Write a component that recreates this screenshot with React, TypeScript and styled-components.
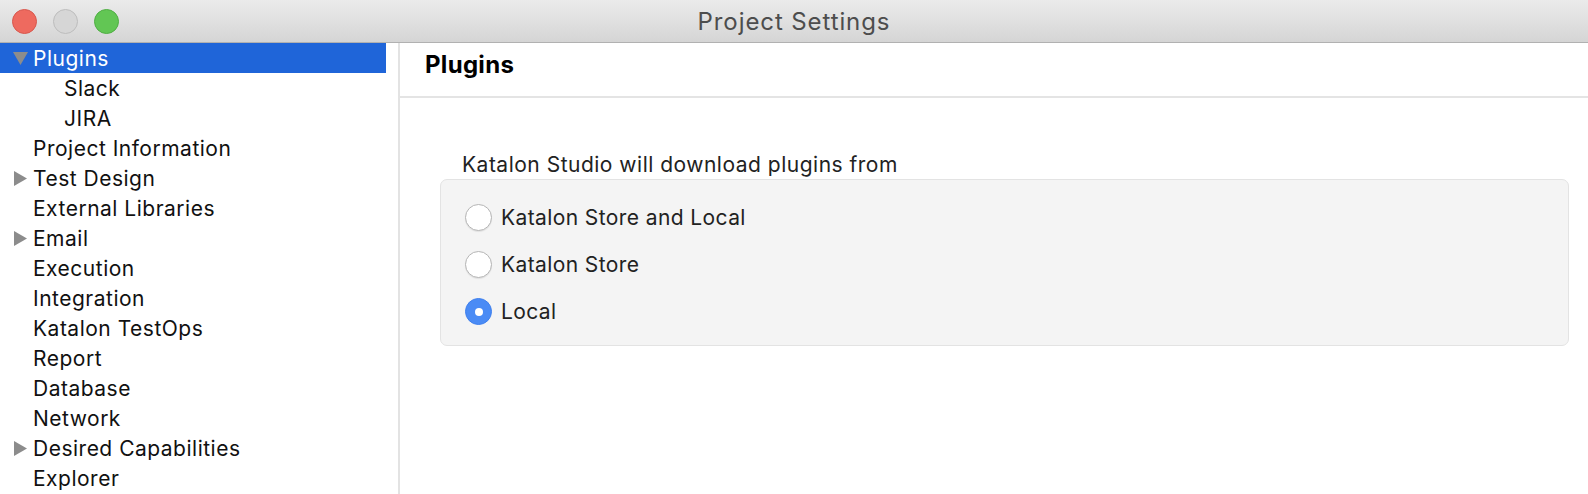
import React from "react";
import styled, { createGlobalStyle } from "styled-components";

const Global = createGlobalStyle`
  html, body { margin: 0; padding: 0; background: #ffffff; }
  body { font-family: Inter, "Noto Sans", "Liberation Sans", sans-serif; }
  #root { width: 1588px; height: 494px; overflow: hidden; }
`;

const Window = styled.div`
  width: 1588px;
  height: 494px;
  display: flex;
  flex-direction: column;
  background: #fff;
`;

const TitleBar = styled.div`
  position: relative;
  height: 42px;
  flex: none;
  display: flex;
  align-items: center;
  justify-content: center;
  background: linear-gradient(#ebebeb, #d5d5d5);
  border-bottom: 1px solid #b1b1b1;
`;

const Lights = styled.div`
  position: absolute;
  left: 12px;
  top: 9px;
  display: flex;
  gap: 16px;
`;

const Light = styled.span<{ $fill: string; $edge: string }>`
  width: 23px;
  height: 23px;
  border-radius: 50%;
  background: ${(p) => p.$fill};
  border: 1px solid ${(p) => p.$edge};
`;

const Title = styled.div`
  font-size: 24px;
  color: #4d4d4d;
  letter-spacing: 0.9px;
`;

const Body = styled.div`
  flex: 1;
  display: flex;
  min-height: 0;
`;

const Sidebar = styled.div`
  width: 398px;
  flex: none;
  border-right: 2px solid #e3e3e3;
  display: flex;
  flex-direction: column;
`;

const Row = styled.div<{ $selected?: boolean; $level: number }>`
  width: 386px;
  height: 30px;
  display: flex;
  align-items: center;
  box-sizing: border-box;
  padding-left: ${(p) => (p.$level === 0 ? 13 : 64)}px;
  background: ${(p) => (p.$selected ? "#1f65d9" : "transparent")};
  color: ${(p) => (p.$selected ? "#ffffff" : "#111111")};
  font-size: 21px;
  letter-spacing: 0.5px;
  white-space: nowrap;
`;

const Arrow = styled.span`
  width: 20px;
  height: 16px;
  flex: none;
  display: flex;
  align-items: center;
`;

const Content = styled.div`
  flex: 1;
  display: flex;
  flex-direction: column;
`;

const Header = styled.div`
  height: 55px;
  flex: none;
  display: flex;
  align-items: center;
  padding-left: 25px;
  padding-bottom: 10px;
  box-sizing: border-box;
  border-bottom: 2px solid #e4e4e4;
  font-size: 24px;
  font-weight: 700;
  letter-spacing: 0.3px;
  color: #000;
`;

const Section = styled.div`
  padding: 54px 19px 0 40px;
  display: flex;
  flex-direction: column;
`;

const GroupLabel = styled.div`
  padding-left: 22px;
  font-size: 21px;
  letter-spacing: 0.5px;
  color: #222;
  line-height: 26px;
  margin-bottom: 1px;
  white-space: nowrap;
`;

const Group = styled.div`
  height: 167px;
  box-sizing: border-box;
  background: #f4f4f4;
  border: 1px solid #e3e3e3;
  border-radius: 7px;
  padding: 24px 0 0 24px;
  display: flex;
  flex-direction: column;
  gap: 20px;
`;

const RadioRow = styled.label`
  display: flex;
  align-items: center;
  gap: 9px;
  height: 27px;
  font-size: 21px;
  letter-spacing: 0.4px;
  color: #222;
  white-space: nowrap;
`;

const RadioCircle = styled.span<{ $checked?: boolean }>`
  width: 27px;
  height: 27px;
  box-sizing: border-box;
  border-radius: 50%;
  flex: none;
  display: flex;
  align-items: center;
  justify-content: center;
  background: ${(p) => (p.$checked ? "#4a8bf5" : "#ffffff")};
  border: 1px solid ${(p) => (p.$checked ? "#3f80ee" : "#b5b5b5")};
  box-shadow: ${(p) => (p.$checked ? "none" : "0 1px 1px rgba(0,0,0,0.08)")};
`;

const Dot = styled.span`
  width: 8px;
  height: 8px;
  border-radius: 50%;
  background: #fff;
`;

type Item = { label: string; level: number; arrow?: "down" | "right"; selected?: boolean };

const items: Item[] = [
  { label: "Plugins", level: 0, arrow: "down", selected: true },
  { label: "Slack", level: 1 },
  { label: "JIRA", level: 1 },
  { label: "Project Information", level: 0 },
  { label: "Test Design", level: 0, arrow: "right" },
  { label: "External Libraries", level: 0 },
  { label: "Email", level: 0, arrow: "right" },
  { label: "Execution", level: 0 },
  { label: "Integration", level: 0 },
  { label: "Katalon TestOps", level: 0 },
  { label: "Report", level: 0 },
  { label: "Database", level: 0 },
  { label: "Network", level: 0 },
  { label: "Desired Capabilities", level: 0, arrow: "right" },
  { label: "Explorer", level: 0 },
];

const TriangleIcon = ({ dir }: { dir?: "down" | "right" }) => {
  if (!dir) return null;
  return (
    <svg width="15" height="15" viewBox="0 0 15 15">
      {dir === "down" ? (
        <polygon points="0,1 15,1 7.5,14" fill="#8c8c8c" />
      ) : (
        <polygon points="1,0 14,7.5 1,15" fill="#8c8c8c" />
      )}
    </svg>
  );
};

const radios = [
  { label: "Katalon Store and Local", checked: false },
  { label: "Katalon Store", checked: false },
  { label: "Local", checked: true },
];

export default function App() {
  return (
    <>
      <Global />
      <Window>
        <TitleBar>
          <Lights>
            <Light $fill="#ee6a5f" $edge="#d8574d" />
            <Light $fill="#d6d6d6" $edge="#bdbdbd" />
            <Light $fill="#62c654" $edge="#4fae43" />
          </Lights>
          <Title>Project Settings</Title>
        </TitleBar>
        <Body>
          <Sidebar>
            {items.map((it) => (
              <Row key={it.label} $level={it.level} $selected={it.selected}>
                {it.level === 0 && (
                  <Arrow>
                    <TriangleIcon dir={it.arrow} />
                  </Arrow>
                )}
                {it.label}
              </Row>
            ))}
          </Sidebar>
          <Content>
            <Header>Plugins</Header>
            <Section>
              <GroupLabel>Katalon Studio will download plugins from</GroupLabel>
              <Group>
                {radios.map((r) => (
                  <RadioRow key={r.label}>
                    <RadioCircle $checked={r.checked}>{r.checked && <Dot />}</RadioCircle>
                    {r.label}
                  </RadioRow>
                ))}
              </Group>
            </Section>
          </Content>
        </Body>
      </Window>
    </>
  );
}
